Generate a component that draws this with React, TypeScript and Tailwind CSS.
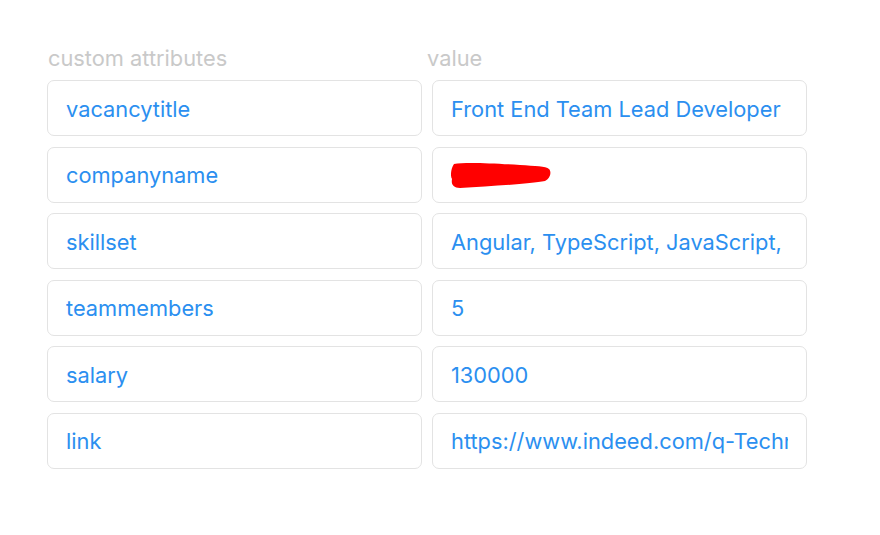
import React from "react";

const rows: [string, string | null][] = [
  ["vacancytitle", "Front End Team Lead Developer"],
  ["companyname", null],
  ["skillset", "Angular, TypeScript, JavaScript, HTML, CSS"],
  ["teammembers", "5"],
  ["salary", "130000"],
  ["link", "https://www.indeed.com/q-Technical-Lead-jobs.html"],
];

function Box({ children }: { children: React.ReactNode }) {
  return (
    <div className="h-[56px] w-[375px] rounded-[7px] border border-[#e3e3e3] bg-white pl-[18px] pr-[18px] flex items-center overflow-hidden">
      <div className="whitespace-nowrap overflow-hidden w-full text-[21.8px] text-[#2b8ff0] leading-[30px] pt-[1px]">
        {children}
      </div>
    </div>
  );
}

export default function App() {
  return (
    <div
      className="w-[880px] h-[535px] bg-white pl-[47px] pt-[43px]"
      style={{ fontFamily: "Inter, 'Open Sans', sans-serif" }}
    >
      <div className="flex gap-[10px] text-[21.8px] text-[#c9c9c9] leading-[30px] mb-[7px]">
        <div className="w-[375px] pl-[1px]">custom attributes</div>
        <div className="w-[375px] -ml-[5px]">value</div>
      </div>
      <div className="flex flex-col gap-[10.6px]">
        {rows.map(([k, v]) => (
          <div key={k} className="flex gap-[10px]">
            <Box>{k}</Box>
            <Box>
              {v === null ? (
                <svg width="104" height="30" viewBox="0 0 104 30" className="block -ml-[1px]">
                  <path
                    d="M4 4 C14 2 40 3 70 5 C85 6 96 6 99 9 C102 12 100 19 95 21 C80 24 40 26 10 28 C3 28 1 24 2 19 C0 16 1 8 4 4 Z"
                    fill="#ff0000"
                  />
                </svg>
              ) : (
                v
              )}
            </Box>
          </div>
        ))}
      </div>
    </div>
  );
}
